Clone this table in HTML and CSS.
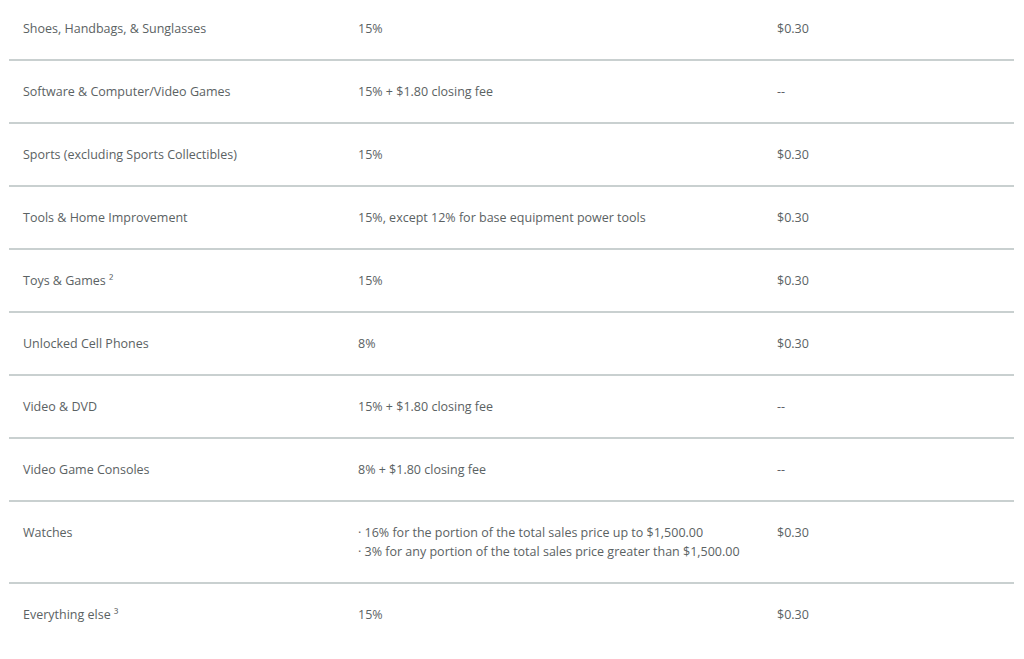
FILE: index.html
```html
<!DOCTYPE html>
<html>
<head>
<meta charset="utf-8">
<link rel="stylesheet" href="styles.css">
</head>
<body>
<table class="fees">
  <colgroup><col class="c1"><col class="c2"><col class="c3"></colgroup>
  <tbody>
    <tr><td>Shoes, Handbags, &amp; Sunglasses</td><td>15%</td><td>$0.30</td></tr>
    <tr><td>Software &amp; Computer/Video Games</td><td>15% + $1.80 closing fee</td><td>--</td></tr>
    <tr><td>Sports (excluding Sports Collectibles)</td><td>15%</td><td>$0.30</td></tr>
    <tr><td>Tools &amp; Home Improvement</td><td>15%, except 12% for base equipment power tools</td><td>$0.30</td></tr>
    <tr><td>Toys &amp; Games ²</td><td>15%</td><td>$0.30</td></tr>
    <tr><td>Unlocked Cell Phones</td><td>8%</td><td>$0.30</td></tr>
    <tr><td>Video &amp; DVD</td><td>15% + $1.80 closing fee</td><td>--</td></tr>
    <tr><td>Video Game Consoles</td><td>8% + $1.80 closing fee</td><td>--</td></tr>
    <tr><td>Watches</td><td>· 16% for the portion of the total sales price up to $1,500.00<br>· 3% for any portion of the total sales price greater than $1,500.00</td><td>$0.30</td></tr>
    <tr class="last"><td>Everything else ³</td><td>15%</td><td>$0.30</td></tr>
  </tbody>
</table>
</body>
</html>
```
FILE: styles.css
```css
html, body {
  margin: 0;
  padding: 0;
  background: #ffffff;
}
body {
  font-family: "Open Sans", "Liberation Sans", sans-serif;
  font-size: 12.5px;
  color: #5b6263;
  overflow: hidden;
}
.fees {
  border-collapse: collapse;
  table-layout: fixed;
  width: 1005px;
  margin: -2px 0 0 9px;
}
.c1 { width: 335px; }
.c2 { width: 419px; }
.c3 { width: 251px; }
.fees td {
  padding: 21px 14px;
  line-height: 19px;
  vertical-align: top;
  border-bottom: 2px solid #c9d0d0;
}
.fees .last td {
  border-bottom: none;
}
```
